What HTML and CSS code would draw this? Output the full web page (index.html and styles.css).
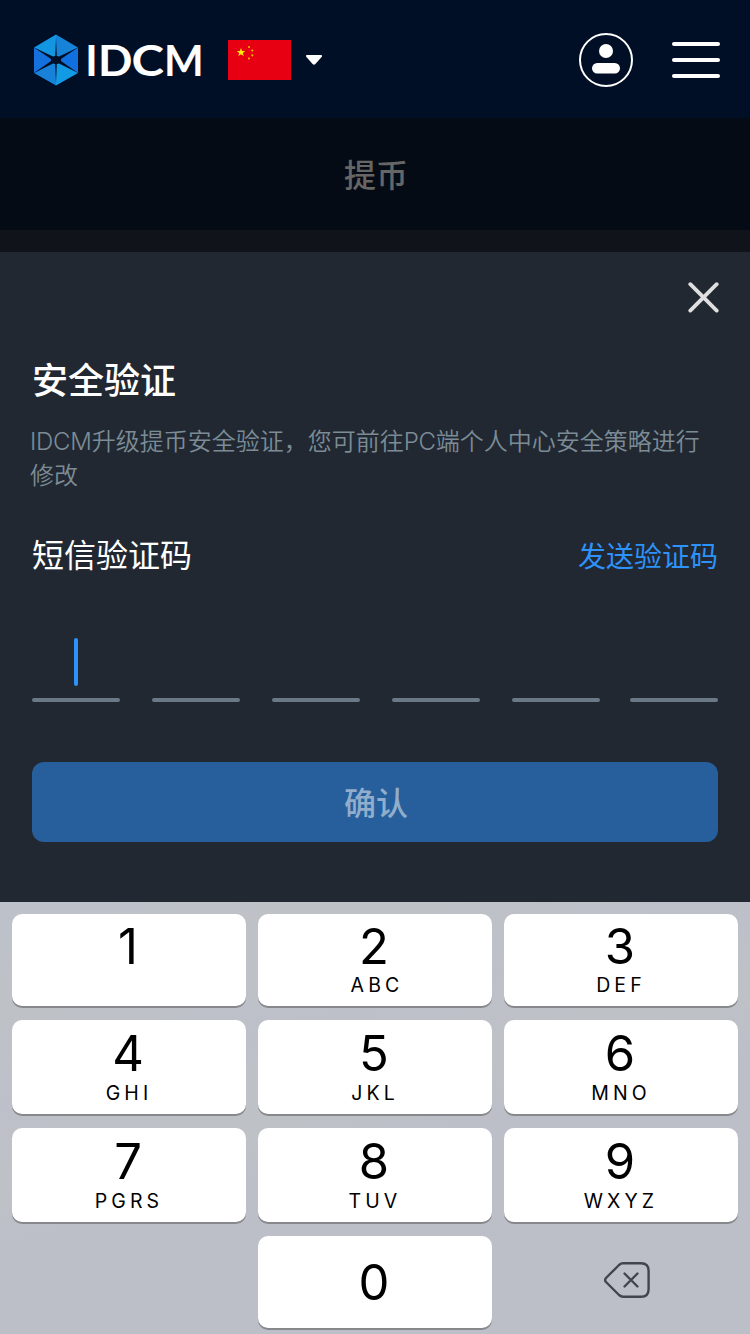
FILE: index.html
```html
<!DOCTYPE html>
<html lang="zh-CN">
<head>
<meta charset="utf-8">
<title>IDCM 提币</title>
<link rel="stylesheet" href="styles.css">
</head>
<body>
<div class="screen">
  <header class="topbar">
    <svg class="logo" width="172" height="54" viewBox="0 0 172 54">
      <path d="M24 1.5 2 14.5 24 27Z" fill="#1296e1"/>
      <path d="M24 1.5 46 14.5 24 27Z" fill="#1682d8"/>
      <path d="M2 14.5V40L24 27Z" fill="#1370dc"/>
      <path d="M46 14.5V40L24 27Z" fill="#1070e0"/>
      <path d="M2 40 24 52.5V27Z" fill="#1881da"/>
      <path d="M46 40 24 52.5V27Z" fill="#129be4"/>
      <path d="M24 5 24.8 23 27 23.5 46 14.5 29 26V28L46 40 27 30.5 24.8 31 24 50 23.2 31 21 30.5 2 40 19 28V26L2 14.5 21 23.5 23.2 23Z" fill="#010f26"/>
      <circle cx="24" cy="27" r="3.5" fill="#010f26"/>
      <g class="logo-text">
        <text x="53.2" y="42.5">I</text>
        <text x="66" y="42.5" textLength="34.5" lengthAdjust="spacingAndGlyphs">D</text>
        <text x="99.5" y="42.5" textLength="32.5" lengthAdjust="spacingAndGlyphs">C</text>
        <text x="132" y="42.5">M</text>
      </g>
    </svg>
    <svg class="flag" width="63" height="40" viewBox="0 0 63 40">
      <path d="M0 0H63V40H0Z" fill="#e70012"/>
      <path d="M13 8 14.1 11H17.2L14.8 12.9 15.7 16 13 14.2 10.3 16 11.2 12.9 8.8 11H11.9Z" fill="#fff100"/>
      <g fill="#f6b800"><circle cx="21" cy="7" r="1.1"/><circle cx="24.3" cy="10.5" r="1.1"/><circle cx="24.3" cy="15.3" r="1.1"/><circle cx="21" cy="18.5" r="1.1"/></g>
    </svg>
    <svg class="caret" width="16" height="10" viewBox="0 0 16 10"><path d="M.5 0H15.5Q16.4.8 15.6 1.9L9.4 9Q8 10.4 6.6 9L.4 1.9Q-.4.8.5 0Z" fill="#fff"/></svg>
    <svg class="user" width="54" height="54" viewBox="0 0 54 54"><circle cx="27" cy="27" r="26" fill="none" stroke="#fff" stroke-width="2"/><circle cx="27" cy="18" r="7" fill="#fff"/><rect x="13" y="30" width="28" height="10.5" rx="5.2" fill="#fff"/></svg>
    <div class="menu"><i></i><i></i><i></i></div>
  </header>
  <div class="page-title">提币</div>
  <main class="panel">
    <svg class="close" width="32" height="32" viewBox="0 0 32 32"><path d="M2.3 2.2 28.7 28.6M28.7 2.2 2.3 28.6" stroke="#dfdfdf" stroke-width="3.8" stroke-linecap="round"/></svg>
    <h1 class="heading">安全验证</h1>
    <p class="note"><span class="latin">IDCM</span>升级提币安全验证，您可前往<span class="latin">PC</span>端个人中心安全策略进行<br>修改</p>
    <div class="code-row"><span class="code-label">短信验证码</span><a class="send">发送验证码</a></div>
    <div class="code-input">
      <div class="slot"><span class="cursor"></span></div>
      <div class="slot"></div><div class="slot"></div><div class="slot"></div><div class="slot"></div><div class="slot last"></div>
    </div>
    <button class="confirm">确认</button>
  </main>
  <div class="keypad">
    <div class="key"><b>1</b></div>
    <div class="key"><b>2</b><small class="abc">ABC</small></div>
    <div class="key"><b>3</b><small>DEF</small></div>
    <div class="key low"><b>4</b><small>GHI</small></div>
    <div class="key low"><b>5</b><small>JKL</small></div>
    <div class="key low"><b>6</b><small>MNO</small></div>
    <div class="key low"><b>7</b><small>PGRS</small></div>
    <div class="key low"><b>8</b><small>TUV</small></div>
    <div class="key low"><b>9</b><small>WXYZ</small></div>
    <div></div>
    <div class="key zero"><b>0</b></div>
    <div class="delete">
      <svg width="46" height="36" viewBox="0 0 46 36" fill="none" stroke="#41454f" stroke-width="2.4" stroke-linecap="round"><path d="M19 1.2H37Q44.6 1.2 44.6 8.8V27.2Q44.6 34.8 37 34.8H19Q17 34.8 15 33L2 20Q.2 18 2 16L15 3Q17 1.2 19 1.2Z"/><path d="M20.5 11.5 33.5 24.5M33.5 11.5 20.5 24.5"/></svg>
    </div>
  </div>
</div>
</body>
</html>
```
FILE: styles.css
```css
* { box-sizing: border-box; }
body { margin: 0; font-family: "Noto Sans CJK SC", sans-serif; }
.screen { width: 750px; height: 1334px; overflow: hidden; display: flex; flex-direction: column; background: #212832; }
.topbar { height: 118px; flex: none; display: flex; align-items: center; padding: 2px 30px 0 32px; background: #010f26; }
.logo { flex: none; }
.logo-text { font: 700 42px "Lato", sans-serif; fill: #fff; }
.flag { margin-left: 24px; }
.caret { margin-left: 15px; }
.user { margin-left: auto; }
.menu { width: 48px; margin-left: 39px; display: grid; gap: 12px; }
.menu i { height: 4px; border-radius: 2px; background: #fff; }
.page-title { height: 134px; flex: none; border-bottom: 22px solid #101319; background: #040b14; color: #666; font-size: 32px; font-weight: 500; line-height: 111px; text-align: center; padding-left: 2px; }
.panel { height: 650px; flex: none; padding: 30px 32px 0; display: flex; flex-direction: column; }
.close { align-self: flex-end; margin-right: -2px; }
.heading { margin: 36px 0 0; height: 56px; line-height: 56px; font-size: 36px; font-weight: 500; color: #fff; }
.note { margin: 17px -20px 0 -2px; height: 68px; line-height: 34px; font-size: 24px; font-family: "Noto Sans CJK SC DemiLight", "Noto Sans CJK SC", sans-serif; font-weight: 300; color: #7c8c96; white-space: nowrap; }
.latin { font-family: "Inter", sans-serif; line-height: 1; letter-spacing: -0.25px; }
.code-row { height: 48px; margin-top: 40px; display: flex; justify-content: space-between; align-items: flex-start; line-height: 48px; }
.code-label { font-size: 32px; color: #fff; margin-top: -2px; }
.send { font-size: 28px; color: #2d92fa; }
.code-input { margin-top: 59px; display: flex; gap: 32px; height: 64px; }
.slot { width: 88px; display: flex; justify-content: center; align-items: flex-start; position: relative; }
.slot::after { content: ""; position: absolute; left: 0; right: 0; bottom: 0; height: 4px; border-radius: 2px; background: #6b7886; }
.last { margin-left: -2px; }
.cursor { width: 4px; height: 48px; border-radius: 2px; background: #2d92fa; }
.confirm { margin-top: 60px; height: 80px; flex: none; border: 0; border-radius: 12px; background: #265f9b; color: #91adcc; font: 500 32px/78px "Noto Sans CJK SC", sans-serif; padding: 0 0 2px 2px; }
.keypad { flex: 1; padding: 12px 12px 0; display: grid; grid-template: 92px 94px 94px 92px / repeat(3, 234px); gap: 14px 12px; background: linear-gradient(165deg, #bdc1cb 0, #bec2c6 15%, #bdc0c9 32%, #bec1c5 45%, #bcbfc8 56%); }
.key { display: flex; flex-direction: column; align-items: center; padding-top: 8px; border-radius: 10px; background: #fff; box-shadow: 0 2px 0 #86888c; color: #000; font-family: "Inter", sans-serif; }
.key b { height: 50px; line-height: 50px; font-size: 49px; font-weight: 400; padding-right: 2px; }
.key small { height: 24px; line-height: 24px; margin-top: 1px; font-size: 19.5px; letter-spacing: 4.1px; }
.key .abc { padding-left: 4px; }
.low { padding-top: 9px; }
.low small { margin-top: 2px; }
.zero { padding-top: 22px; }
.delete { display: grid; place-items: center; padding: 0 0 4px 12px; }
```
